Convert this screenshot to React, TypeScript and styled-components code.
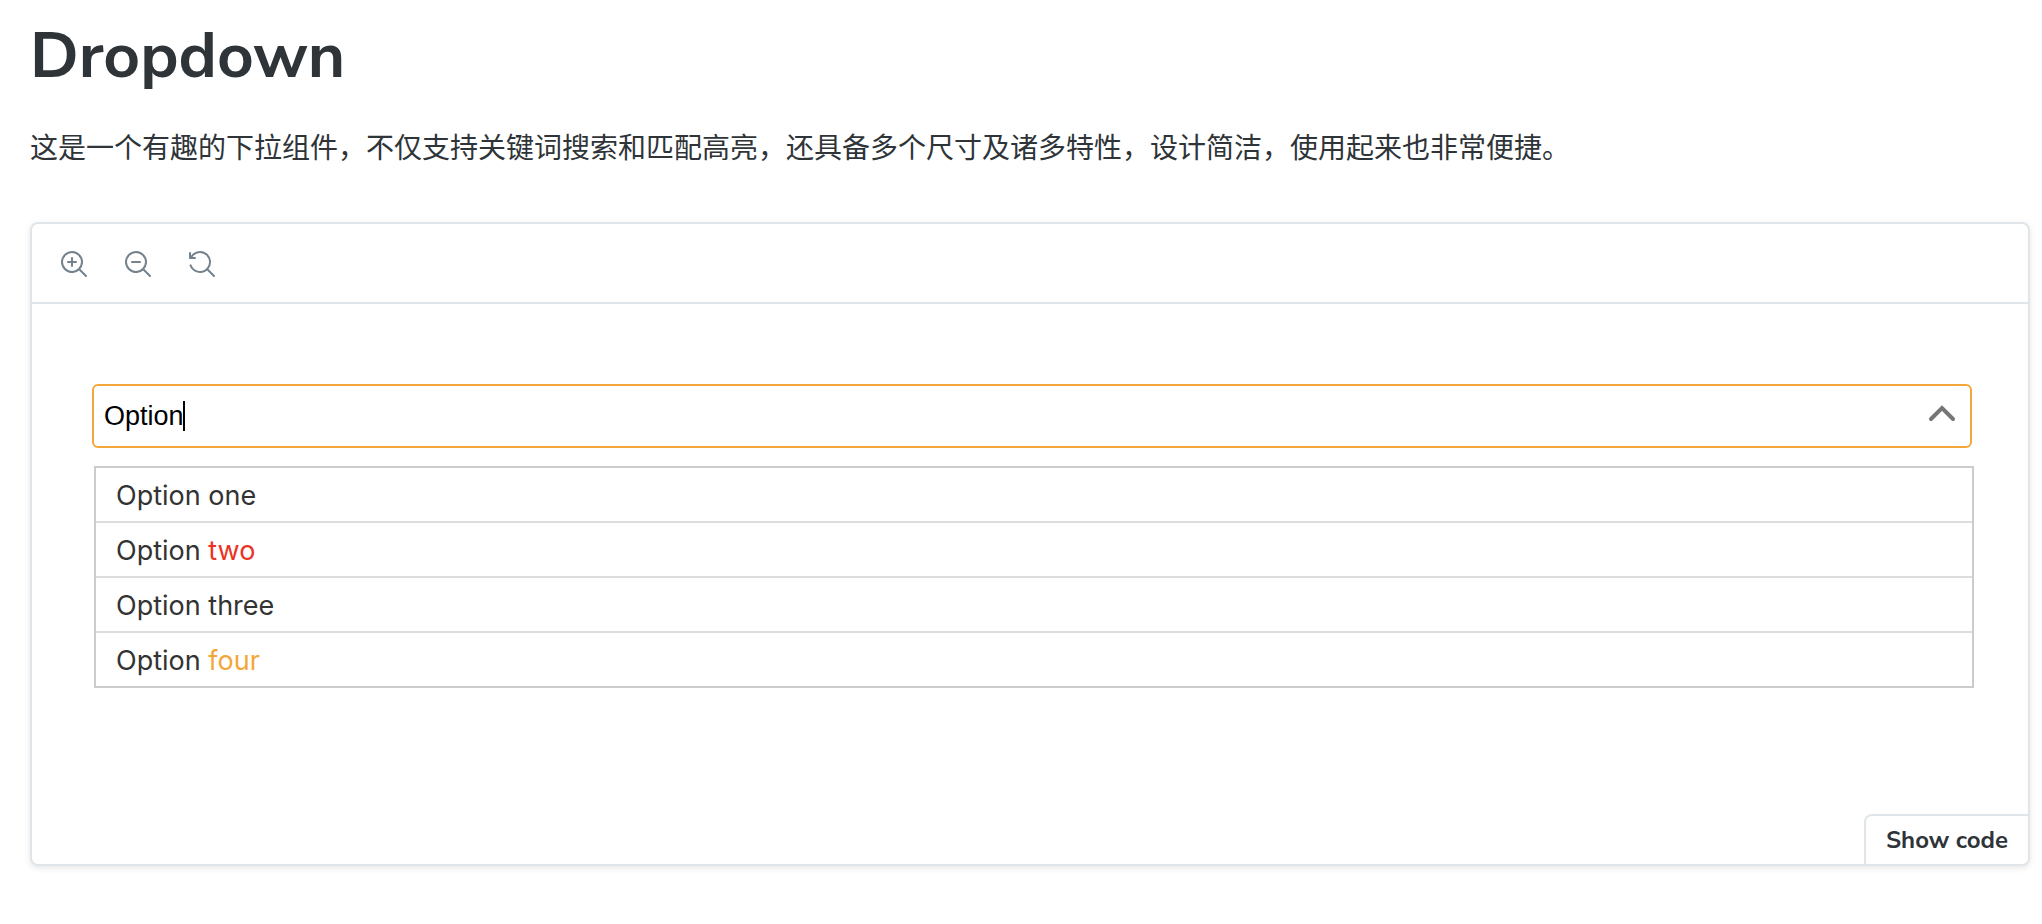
import React, { useState } from "react";
import styled, { createGlobalStyle } from "styled-components";

const GlobalStyle = createGlobalStyle`
  *, *::before, *::after { box-sizing: border-box; }
  body {
    margin: 0;
    background: #ffffff;
    color: #2e3438;
    font-family: "Nunito Sans", Lato, "Noto Sans CJK SC", sans-serif;
  }
`;

const Page = styled.main`
  padding: 16px 12px 58px 30px;
`;

const Title = styled.h1`
  margin: 0;
  font-size: 64px;
  line-height: 80px;
  font-weight: 700;
`;

const Description = styled.p`
  margin: 30px 0 56px;
  font-family: "Noto Sans CJK SC", sans-serif;
  font-size: 28px;
  line-height: 40px;
`;

const Preview = styled.section`
  border: 2px solid #dfe5e9;
  border-radius: 8px;
  background: #ffffff;
  box-shadow: 0 2px 6px rgba(0, 0, 0, 0.1);
`;

const Toolbar = styled.div`
  display: flex;
  align-items: center;
  gap: 8px;
  height: 80px;
  padding: 2px 14px 0;
  border-bottom: 2px solid #dfe5e9;
`;

const ToolButton = styled.button`
  display: flex;
  align-items: center;
  justify-content: center;
  width: 56px;
  height: 56px;
  padding: 0;
  border: 0;
  background: none;
  color: #73828c;
  cursor: pointer;
`;

const Stage = styled.div`
  padding: 80px 56px 126px 60px;
`;

const Field = styled.div`
  position: relative;
  display: flex;
  align-items: center;
  height: 64px;
  border: 2px solid #f2a73b;
  border-radius: 6px;
  background: #ffffff;
`;

const SearchInput = styled.input`
  flex: 1;
  min-width: 0;
  height: 60px;
  padding: 0 10px;
  border: 0;
  outline: 0;
  background: none;
  color: #000000;
  font-family: "Liberation Sans", Arial, sans-serif;
  font-size: 27px;
`;

const Caret = styled.span`
  position: absolute;
  left: 89px;
  top: 15px;
  width: 2px;
  height: 30px;
  background: #000000;
`;

const ToggleButton = styled.button`
  display: flex;
  align-items: center;
  justify-content: center;
  width: 56px;
  height: 60px;
  padding: 0 0 6px;
  border: 0;
  background: none;
  color: #767676;
  cursor: pointer;
`;

const OptionList = styled.ul`
  margin: 18px -2px 0 2px;
  padding: 0;
  border: 2px solid #cccccc;
  list-style: none;
`;

const OptionItem = styled.li`
  padding: 10px 20px 7px;
  color: #333333;
  font-family: Inter, sans-serif;
  font-size: 27px;
  line-height: 36px;

  & + & {
    border-top: 2px solid #dddddd;
  }
`;

const Accent = styled.span<{ $color: string }>`
  color: ${(p) => p.$color};
`;

const Footer = styled.div`
  display: flex;
  justify-content: flex-end;
`;

const CodeButton = styled.button`
  height: 50px;
  padding: 0 20px;
  border: solid #dfe5e9;
  border-width: 2px 0 0 2px;
  border-radius: 8px 0 6px 0;
  background: #ffffff;
  color: #2e3438;
  font-family: inherit;
  font-size: 24px;
  line-height: 32px;
  font-weight: 700;
  cursor: pointer;
`;

const LENS =
  "M9.544 10.206a5.5 5.5 0 11.662-.662.5.5 0 01.148.102l3 3a.5.5 0 01-.708.708l-3-3a.5.5 0 01-.102-.148zM10.5 6a4.5 4.5 0 11-9 0 4.5 4.5 0 019 0z";

const tools = [
  {
    label: "Zoom in",
    paths: [
      "M6 3.5a.5.5 0 01.5.5v1.5H8a.5.5 0 010 1H6.5V8a.5.5 0 01-1 0V6.5H4a.5.5 0 010-1h1.5V4a.5.5 0 01.5-.5z",
      LENS,
    ],
  },
  { label: "Zoom out", paths: ["M4 5.5a.5.5 0 000 1h4a.5.5 0 000-1H4z", LENS] },
  {
    label: "Reset zoom",
    paths: [
      "M1.5 2.837V1.5a.5.5 0 00-1 0V4a.5.5 0 00.5.5h2.5a.5.5 0 000-1H2.258a4.5 4.5 0 11-.496 4.016.5.5 0 10-.942.337 5.502 5.502 0 008.724 2.353.5.5 0 00.102.148l3 3a.5.5 0 00.708-.708l-3-3a.5.5 0 00-.148-.102A5.5 5.5 0 101.5 2.837z",
    ],
  },
];

const options: { word: string; color?: string }[] = [
  { word: "one" },
  { word: "two", color: "#ea3323" },
  { word: "three" },
  { word: "four", color: "#f2a73b" },
];

export default function App() {
  const [query, setQuery] = useState("Option");

  return (
    <>
      <GlobalStyle />
      <Page>
        <Title>Dropdown</Title>
        <Description lang="zh-CN">
          这是一个有趣的下拉组件，不仅支持关键词搜索和匹配高亮，还具备多个尺寸及诸多特性，设计简洁，使用起来也非常便捷。
        </Description>
        <Preview>
          <Toolbar>
            {tools.map((tool) => (
              <ToolButton key={tool.label} type="button" aria-label={tool.label}>
                <svg width="28" height="28" viewBox="0 0 14 14" fill="currentColor" aria-hidden="true">
                  {tool.paths.map((d) => (
                    <path key={d} d={d} fillRule="evenodd" clipRule="evenodd" />
                  ))}
                </svg>
              </ToolButton>
            ))}
          </Toolbar>
          <Stage>
            <Field>
              <SearchInput
                aria-label="Search options"
                value={query}
                onChange={(e) => setQuery(e.target.value)}
              />
              {query === "Option" && <Caret />}
              <ToggleButton type="button" aria-label="Close options">
                <svg width="28" height="20" viewBox="0 0 28 20" fill="none" aria-hidden="true">
                  <path d="M3 16 14 5l11 11" stroke="currentColor" strokeWidth="4" strokeLinecap="round" strokeLinejoin="miter" />
                </svg>
              </ToggleButton>
            </Field>
            <OptionList>
              {options.map(({ word, color }) => (
                <OptionItem key={word}>
                  Option {color ? <Accent $color={color}>{word}</Accent> : word}
                </OptionItem>
              ))}
            </OptionList>
          </Stage>
          <Footer>
            <CodeButton type="button">Show code</CodeButton>
          </Footer>
        </Preview>
      </Page>
    </>
  );
}
